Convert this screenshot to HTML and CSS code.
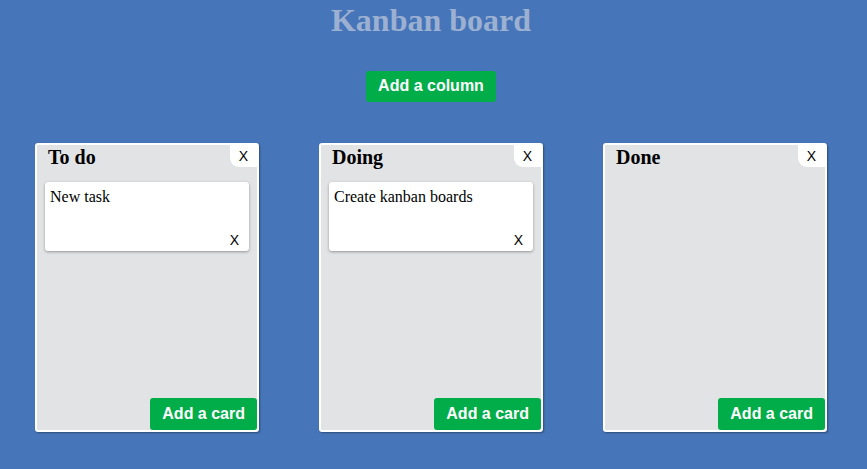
FILE: index.html
```html
<!DOCTYPE html>
<html>
<head>
<meta charset="utf-8">
<link rel="stylesheet" href="styles.css">
</head>
<body>
<h1 class="title">Kanban board</h1>
<div class="toolbar"><button class="btn">Add a column</button></div>
<div class="board">
  <div class="column">
    <div class="column-head"><h2 class="column-title">To do</h2><span class="close">X</span></div>
    <div class="cards">
      <div class="card"><div class="card-text">New task</div><span class="card-x">X</span></div>
    </div>
    <button class="btn btn-card">Add a card</button>
  </div>
  <div class="column">
    <div class="column-head"><h2 class="column-title">Doing</h2><span class="close">X</span></div>
    <div class="cards">
      <div class="card"><div class="card-text">Create kanban boards</div><span class="card-x">X</span></div>
    </div>
    <button class="btn btn-card">Add a card</button>
  </div>
  <div class="column">
    <div class="column-head"><h2 class="column-title">Done</h2><span class="close">X</span></div>
    <div class="cards"></div>
    <button class="btn btn-card">Add a card</button>
  </div>
</div>
</body>
</html>
```
FILE: styles.css
```css
html, body {
  margin: 0;
  height: 100%;
}
body {
  background: #4675b9;
  font-family: "Liberation Serif", "Times New Roman", serif;
  padding-right: 5px;
  box-sizing: border-box;
}
.title {
  margin: 2px 0 0;
  text-align: center;
  font-size: 32px;
  font-weight: bold;
  color: #9cb0d1;
  line-height: 37px;
}
.toolbar {
  display: flex;
  justify-content: center;
  margin-top: 32px;
}
.btn {
  font-family: "Liberation Sans", Arial, sans-serif;
  font-weight: bold;
  font-size: 16px;
  line-height: 18px;
  color: #fff;
  background: #00ad48;
  border: none;
  border-radius: 3px;
  padding: 6px 12px 7px;
  margin: 0;
  cursor: pointer;
}
.board {
  display: flex;
  justify-content: center;
  gap: 60px;
  margin-top: 41px;
}
.column {
  width: 224px;
  height: 289px;
  box-sizing: border-box;
  background: #e2e3e5;
  border: 2px solid #fff;
  border-radius: 3px;
  box-shadow: 1px 1px 2px rgba(0, 0, 0, 0.35);
  display: flex;
  flex-direction: column;
}
.column-head {
  display: flex;
  justify-content: space-between;
  align-items: flex-start;
}
.column-title {
  margin: 0;
  padding: 1px 0 0 11px;
  font-size: 20px;
  line-height: 23px;
  font-weight: bold;
  color: #000;
}
.close {
  width: 27px;
  height: 22px;
  background: #fff;
  border-bottom-left-radius: 9px;
  font-family: "Liberation Sans", Arial, sans-serif;
  font-size: 14px;
  line-height: 22px;
  text-align: center;
  color: #000;
}
.cards {
  padding: 13px 8px 0;
}
.card {
  background: #fff;
  border-radius: 3px;
  box-shadow: 0 1px 3px rgba(0, 0, 0, 0.35);
  height: 69px;
  box-sizing: border-box;
  padding: 6px 10px 3px 5px;
  display: flex;
  flex-direction: column;
}
.card-text {
  font-size: 16px;
  line-height: 18px;
}
.card-x {
  margin-top: auto;
  align-self: flex-end;
  font-family: "Liberation Sans", Arial, sans-serif;
  font-size: 14px;
  line-height: 16px;
}
.btn-card {
  margin-top: auto;
  align-self: flex-end;
  padding: 7px 12px 7px;
}
```
